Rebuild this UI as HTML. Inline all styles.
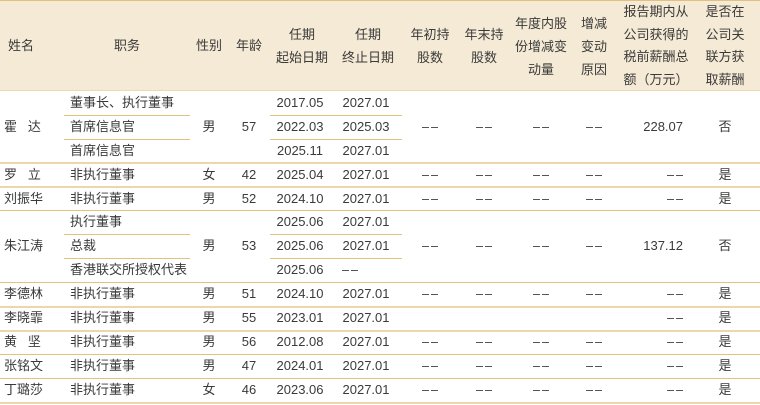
<!DOCTYPE html>
<html><head><meta charset="utf-8"><style>
body{margin:0;width:760px;height:405px;background:#fff;font-family:"Liberation Sans","Noto Sans CJK SC",sans-serif;font-size:13px;color:#3a3a3a;position:relative;overflow:hidden}
.h{position:absolute;left:0;top:0;width:760px;height:91px;background:#f5ead5;border-top:1px solid #e2c17e;border-bottom:1px solid #ecd9b3;box-sizing:border-box}
.t{position:absolute;line-height:22px;white-space:nowrap}
.c{text-align:center;transform:translateX(-50%)}
.r{text-align:right;transform:translateX(-100%)}
.l{position:absolute;height:1px;background:#e3c27f}
.L{position:absolute;height:2px;background:#ecd7aa}
.d{position:absolute;width:16px;height:1px;background:linear-gradient(90deg,#555 0 7px,transparent 7px 9px,#555 9px 16px)}
</style></head><body>
<div class="h"></div>
<div class="t" style="left:8px;top:35px">姓名</div>
<div class="t c" style="left:127px;top:35px">职务</div>
<div class="t c" style="left:209px;top:35px">性别</div>
<div class="t c" style="left:249px;top:35px">年龄</div>
<div class="t c" style="left:302px;top:23px;line-height:23px">任期<br>起始日期</div>
<div class="t c" style="left:368px;top:23px;line-height:23px">任期<br>终止日期</div>
<div class="t c" style="left:430px;top:23px;line-height:23px">年初持<br>股数</div>
<div class="t c" style="left:484px;top:23px;line-height:23px">年末持<br>股数</div>
<div class="t c" style="left:541px;top:12px;line-height:23px">年度内股<br>份增减变<br>动量</div>
<div class="t c" style="left:594px;top:12px;line-height:23px">增减<br>变动<br>原因</div>
<div class="t c" style="left:656px;top:1px;line-height:22.5px">报告期内从<br>公司获得的<br>税前薪酬总<br>额（万元）</div>
<div class="t c" style="left:725px;top:1px;line-height:22.5px">是否在<br>公司关<br>联方获<br>取薪酬</div>

<div class="l" style="left:64px;width:126px;top:115px"></div>
<div class="l" style="left:64px;width:126px;top:139px"></div>
<div class="l" style="left:270px;width:132px;top:115px"></div>
<div class="l" style="left:270px;width:132px;top:139px"></div>
<div class="L" style="left:0;width:760px;top:162px"></div>
<div class="L" style="left:0;width:760px;top:186px"></div>
<div class="l" style="left:0;width:760px;top:210px"></div>
<div class="l" style="left:64px;width:126px;top:234px"></div>
<div class="l" style="left:64px;width:126px;top:258px"></div>
<div class="l" style="left:270px;width:132px;top:234px"></div>
<div class="l" style="left:270px;width:132px;top:258px"></div>
<div class="l" style="left:0;width:760px;top:282px"></div>
<div class="L" style="left:0;width:760px;top:306px"></div>
<div class="L" style="left:0;width:760px;top:330px"></div>
<div class="l" style="left:0;width:760px;top:354px"></div>
<div class="l" style="left:0;width:760px;top:378px"></div>
<div class="L" style="left:0;width:760px;top:402px"></div>

<!-- 霍达 -->
<div class="t" style="left:4px;top:116px">霍&nbsp;&nbsp;&nbsp;达</div>
<div class="t" style="left:70px;top:92px">董事长、执行董事</div>
<div class="t" style="left:70px;top:116px">首席信息官</div>
<div class="t" style="left:70px;top:140px">首席信息官</div>
<div class="t c" style="left:209px;top:116px">男</div>
<div class="t c" style="left:249px;top:116px">57</div>
<div class="t c" style="left:300px;top:92px">2017.05</div>
<div class="t c" style="left:300px;top:116px">2022.03</div>
<div class="t c" style="left:300px;top:140px">2025.11</div>
<div class="t c" style="left:366px;top:92px">2027.01</div>
<div class="t c" style="left:366px;top:116px">2025.03</div>
<div class="t c" style="left:366px;top:140px">2027.01</div>
<div class="d" style="left:422px;top:127px"></div><div class="d" style="left:476px;top:127px"></div><div class="d" style="left:533px;top:127px"></div><div class="d" style="left:586px;top:127px"></div>
<div class="t r" style="left:683px;top:116px">228.07</div>
<div class="t c" style="left:725px;top:116px">否</div>

<div class="t" style="left:4px;top:164px">罗&nbsp;&nbsp;&nbsp;立</div>
<div class="t" style="left:70px;top:164px">非执行董事</div>
<div class="t c" style="left:209px;top:164px">女</div><div class="t c" style="left:249px;top:164px">42</div>
<div class="t c" style="left:300px;top:164px">2025.04</div><div class="t c" style="left:366px;top:164px">2027.01</div>
<div class="d" style="left:422px;top:175px"></div><div class="d" style="left:476px;top:175px"></div><div class="d" style="left:533px;top:175px"></div><div class="d" style="left:586px;top:175px"></div><div class="d" style="left:667px;top:175px"></div>
<div class="t c" style="left:725px;top:164px">是</div>

<div class="t" style="left:4px;top:188px">刘振华</div>
<div class="t" style="left:70px;top:188px">非执行董事</div>
<div class="t c" style="left:209px;top:188px">男</div><div class="t c" style="left:249px;top:188px">52</div>
<div class="t c" style="left:300px;top:188px">2024.10</div><div class="t c" style="left:366px;top:188px">2027.01</div>
<div class="d" style="left:422px;top:199px"></div><div class="d" style="left:476px;top:199px"></div><div class="d" style="left:533px;top:199px"></div><div class="d" style="left:586px;top:199px"></div><div class="d" style="left:667px;top:199px"></div>
<div class="t c" style="left:725px;top:188px">是</div>

<!-- 朱江涛 -->
<div class="t" style="left:4px;top:235px">朱江涛</div>
<div class="t" style="left:70px;top:211px">执行董事</div>
<div class="t" style="left:70px;top:235px">总裁</div>
<div class="t" style="left:70px;top:259px">香港联交所授权代表</div>
<div class="t c" style="left:209px;top:235px">男</div>
<div class="t c" style="left:249px;top:235px">53</div>
<div class="t c" style="left:300px;top:211px">2025.06</div>
<div class="t c" style="left:300px;top:235px">2025.06</div>
<div class="t c" style="left:300px;top:259px">2025.06</div>
<div class="t c" style="left:366px;top:211px">2027.01</div>
<div class="t c" style="left:366px;top:235px">2027.01</div>
<div class="d" style="left:342px;top:270px"></div>
<div class="d" style="left:422px;top:246px"></div><div class="d" style="left:476px;top:246px"></div><div class="d" style="left:533px;top:246px"></div><div class="d" style="left:586px;top:246px"></div>
<div class="t r" style="left:683px;top:235px">137.12</div>
<div class="t c" style="left:725px;top:235px">否</div>

<div class="t" style="left:4px;top:283px">李德林</div>
<div class="t" style="left:70px;top:283px">非执行董事</div>
<div class="t c" style="left:209px;top:283px">男</div><div class="t c" style="left:249px;top:283px">51</div>
<div class="t c" style="left:300px;top:283px">2024.10</div><div class="t c" style="left:366px;top:283px">2027.01</div>
<div class="d" style="left:422px;top:294px"></div><div class="d" style="left:476px;top:294px"></div><div class="d" style="left:533px;top:294px"></div><div class="d" style="left:586px;top:294px"></div><div class="d" style="left:667px;top:294px"></div>
<div class="t c" style="left:725px;top:283px">是</div>

<div class="t" style="left:4px;top:307px">李晓霏</div>
<div class="t" style="left:70px;top:307px">非执行董事</div>
<div class="t c" style="left:209px;top:307px">男</div><div class="t c" style="left:249px;top:307px">55</div>
<div class="t c" style="left:300px;top:307px">2023.01</div><div class="t c" style="left:366px;top:307px">2027.01</div>
<div class="d" style="left:667px;top:318px"></div>
<div class="t c" style="left:725px;top:307px">是</div>

<div class="t" style="left:4px;top:331px">黄&nbsp;&nbsp;&nbsp;坚</div>
<div class="t" style="left:70px;top:331px">非执行董事</div>
<div class="t c" style="left:209px;top:331px">男</div><div class="t c" style="left:249px;top:331px">56</div>
<div class="t c" style="left:300px;top:331px">2012.08</div><div class="t c" style="left:366px;top:331px">2027.01</div>
<div class="d" style="left:422px;top:342px"></div><div class="d" style="left:476px;top:342px"></div><div class="d" style="left:533px;top:342px"></div><div class="d" style="left:586px;top:342px"></div><div class="d" style="left:667px;top:342px"></div>
<div class="t c" style="left:725px;top:331px">是</div>

<div class="t" style="left:4px;top:355px">张铭文</div>
<div class="t" style="left:70px;top:355px">非执行董事</div>
<div class="t c" style="left:209px;top:355px">男</div><div class="t c" style="left:249px;top:355px">47</div>
<div class="t c" style="left:300px;top:355px">2024.01</div><div class="t c" style="left:366px;top:355px">2027.01</div>
<div class="d" style="left:422px;top:366px"></div><div class="d" style="left:476px;top:366px"></div><div class="d" style="left:533px;top:366px"></div><div class="d" style="left:586px;top:366px"></div><div class="d" style="left:667px;top:366px"></div>
<div class="t c" style="left:725px;top:355px">是</div>

<div class="t" style="left:4px;top:379px">丁璐莎</div>
<div class="t" style="left:70px;top:379px">非执行董事</div>
<div class="t c" style="left:209px;top:379px">女</div><div class="t c" style="left:249px;top:379px">46</div>
<div class="t c" style="left:300px;top:379px">2023.06</div><div class="t c" style="left:366px;top:379px">2027.01</div>
<div class="d" style="left:422px;top:390px"></div><div class="d" style="left:476px;top:390px"></div><div class="d" style="left:533px;top:390px"></div><div class="d" style="left:586px;top:390px"></div><div class="d" style="left:667px;top:390px"></div>
<div class="t c" style="left:725px;top:379px">是</div>
</body></html>
